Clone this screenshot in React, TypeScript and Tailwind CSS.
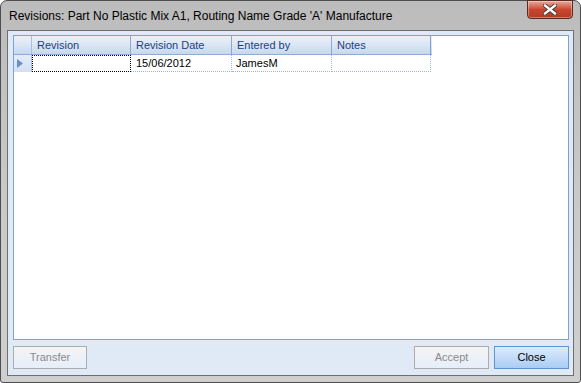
import React from "react";

const cols = [
  { label: "Revision", w: "w-[99px]" },
  { label: "Revision Date", w: "w-[101px]" },
  { label: "Entered by", w: "w-[100px]" },
  { label: "Notes", w: "w-[99px]" },
];

function CloseGlyph() {
  return (
    <svg width="14" height="11" viewBox="0 0 14 11">
      <path d="M2 1.5 L12 9.5 M12 1.5 L2 9.5" stroke="#3a3a3a" strokeWidth="4.2" strokeLinecap="square" />
      <path d="M2 1.5 L12 9.5 M12 1.5 L2 9.5" stroke="#ffffff" strokeWidth="2.3" strokeLinecap="square" />
    </svg>
  );
}

export default function App() {
  return (
    <div className="w-[581px] h-[383px] bg-white">
      <div className="w-[581px] h-[383px] rounded-t-[7px] rounded-b-[3px] border border-[#4e4e4e] bg-gradient-to-b from-[#bcbcbc] via-[#c9c9c9] to-[#cfcfcf] flex flex-col font-['Liberation_Sans',sans-serif]">
        {/* title bar */}
        <div className="h-[29px] flex items-start pl-[8px] pr-[7px]">
          <span className="mt-[6px] text-[12px] text-black">
            Revisions: Part No Plastic Mix A1, Routing Name Grade 'A' Manufacture
          </span>
          <div className="ml-auto w-[46px] h-[19px] -mt-px rounded-b-[4px] border border-[#5a2a22] bg-gradient-to-b from-[#e8a99a] via-[#c9462f] to-[#b33a22] flex items-center justify-center shadow-[inset_0_0_0_1px_rgba(255,255,255,0.35)]">
            <CloseGlyph />
          </div>
        </div>

        {/* client area */}
        <div className="mx-[6px] mb-[6px] flex-1 border border-[#6f6f6f] bg-[#e0eaf7] flex flex-col pt-[4px] pl-[5px] pr-[4px] pb-[6px]">
          <div className="flex-1 border border-[#7da2d6] bg-white text-[11px]">
            {/* header */}
            <div className="flex h-[19px] bg-gradient-to-b from-[#eaf0f9] via-[#dbe6f5] to-[#c6d8ef] border-b border-[#8eabd9] w-[418px]">
              <div className="w-[18px] border-r border-[#a9bfe2]" />
              {cols.map((c, i) => (
                <div
                  key={c.label}
                  className={`${c.w} flex items-center pl-[5px] text-[#1f3f7a] ${i === cols.length - 1 ? "border-r border-[#7da2d6]" : "border-r border-[#8ca8d6]"}`}
                >
                  {c.label}
                </div>
              ))}
            </div>
            {/* data row */}
            <div className="flex h-[17px] w-[418px]">
              <div className="w-[18px] bg-gradient-to-b from-[#e4ecf8] to-[#d3e0f2] border-r border-[#a9bfe2] flex items-center pl-[3px]">
                <svg width="6" height="9" viewBox="0 0 6 9">
                  <path d="M0 0 L6 4.5 L0 9 Z" fill="#6a8fc8" />
                </svg>
              </div>
              <div className="w-[99px] border border-dotted border-black" />
              <div className="w-[101px] border-b border-r border-dotted border-[#9db6de] flex items-center pl-[5px] text-black">
                15/06/2012
              </div>
              <div className="w-[100px] border-b border-r border-dotted border-[#9db6de] flex items-center pl-[4px] text-black">
                JamesM
              </div>
              <div className="w-[99px] border-b border-r border-dotted border-[#9db6de]" />
            </div>
          </div>

          {/* buttons */}
          <div className="flex mt-[6px] h-[23px] text-[11px]">
            <div className="w-[74px] border border-[#adadad] bg-gradient-to-b from-[#f4f4f4] to-[#e6eefa] flex items-center justify-center text-[#8a8a8a]">
              Transfer
            </div>
            <div className="ml-auto w-[75px] border border-[#adadad] bg-gradient-to-b from-[#f4f4f4] to-[#e6eefa] flex items-center justify-center text-[#8a8a8a]">
              Accept
            </div>
            <div className="ml-[5px] w-[75px] border border-[#5d95d4] bg-gradient-to-b from-[#dcebfc] via-[#c4dcf8] to-[#a9ccf4] flex items-center justify-center text-black">
              Close
            </div>
          </div>
        </div>
      </div>
    </div>
  );
}
